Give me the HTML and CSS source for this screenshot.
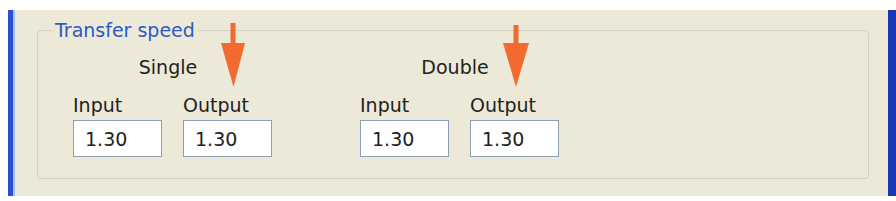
FILE: index.html
```html
<!DOCTYPE html>
<html lang="en">
<head>
    <meta charset="UTF-8">
    <meta name="viewport" content="width=device-width, initial-scale=1.0">
    <title>Transfer speed</title>
    <link rel="stylesheet" href="styles.css">
</head>
<body>
    <div class="panel">
        <fieldset class="box">
            <legend class="box-title">Transfer speed</legend>
            <div class="groups">
                <div class="group">
                    <div class="group-title">Single</div>
                    <div class="fields">
                        <label class="field">
                            <span class="field-label">Input</span>
                            <input class="field-input" type="text" value="1.30">
                        </label>
                        <label class="field">
                            <span class="field-label">Output</span>
                            <input class="field-input" type="text" value="1.30">
                            <svg class="arrow arrow-single" width="24" height="65" viewBox="0 0 24 65">
                                <rect x="9.5" y="0" width="5" height="22" fill="#f36a30"/>
                                <polygon points="0,20 24,20 12.5,64" fill="#f36a30"/>
                            </svg>
                        </label>
                    </div>
                </div>
                <div class="group">
                    <div class="group-title">Double</div>
                    <div class="fields">
                        <label class="field">
                            <span class="field-label">Input</span>
                            <input class="field-input" type="text" value="1.30">
                        </label>
                        <label class="field">
                            <span class="field-label">Output</span>
                            <input class="field-input" type="text" value="1.30">
                            <svg class="arrow arrow-double" width="26" height="63" viewBox="0 0 26 63">
                                <rect x="10.5" y="0" width="5" height="20" fill="#f36a30"/>
                                <polygon points="0,18 26,18 13,62" fill="#f36a30"/>
                            </svg>
                        </label>
                    </div>
                </div>
            </div>
        </fieldset>
    </div>
</body>
</html>
```

FILE: styles.css
```css
body {
    margin: 0;
    padding: 0;
    background-color: white;
    font-family: "DejaVu Sans", Verdana, sans-serif;
    font-size: 19px;
    color: #222;
}

.panel {
    margin: 10px 0 5px 8px;
    padding: 9px 19px 16px 24px;
    background-color: #ece9d8;
    border-left: 5px solid #2a4fd0;
    border-right: 8px solid #1a36b8;
    box-shadow: inset 2px 0 0 #a9c0ee;
    box-sizing: border-box;
    height: 186px;
}

.box {
    margin: 0;
    padding: 0 0 0 14px;
    border: 1px solid #d3d0c0;
    border-radius: 4px;
    height: 160px;
    box-sizing: border-box;
}

.box-title {
    padding: 0 3px;
    line-height: 22px;
    color: #2b5ac6;
}

.groups {
    display: flex;
    gap: 88px;
    margin: 15px 0 0 21px;
}

.group-title {
    text-align: center;
    line-height: 22px;
    margin-bottom: 16px;
    padding-right: 9px;
}

.fields {
    display: flex;
    gap: 21px;
}

.field {
    position: relative;
    display: flex;
    flex-direction: column;
    gap: 4px;
}

.field-label {
    line-height: 22px;
}

.field-input {
    width: 89px;
    height: 37px;
    box-sizing: border-box;
    border: 1px solid #8d9fb2;
    background: white;
    padding: 0 0 0 11px;
    font-family: inherit;
    font-size: inherit;
    color: #222;
}

.arrow {
    position: absolute;
}

.arrow-single {
    left: 38px;
    top: -71px;
}

.arrow-double {
    left: 33px;
    top: -69px;
}
```
